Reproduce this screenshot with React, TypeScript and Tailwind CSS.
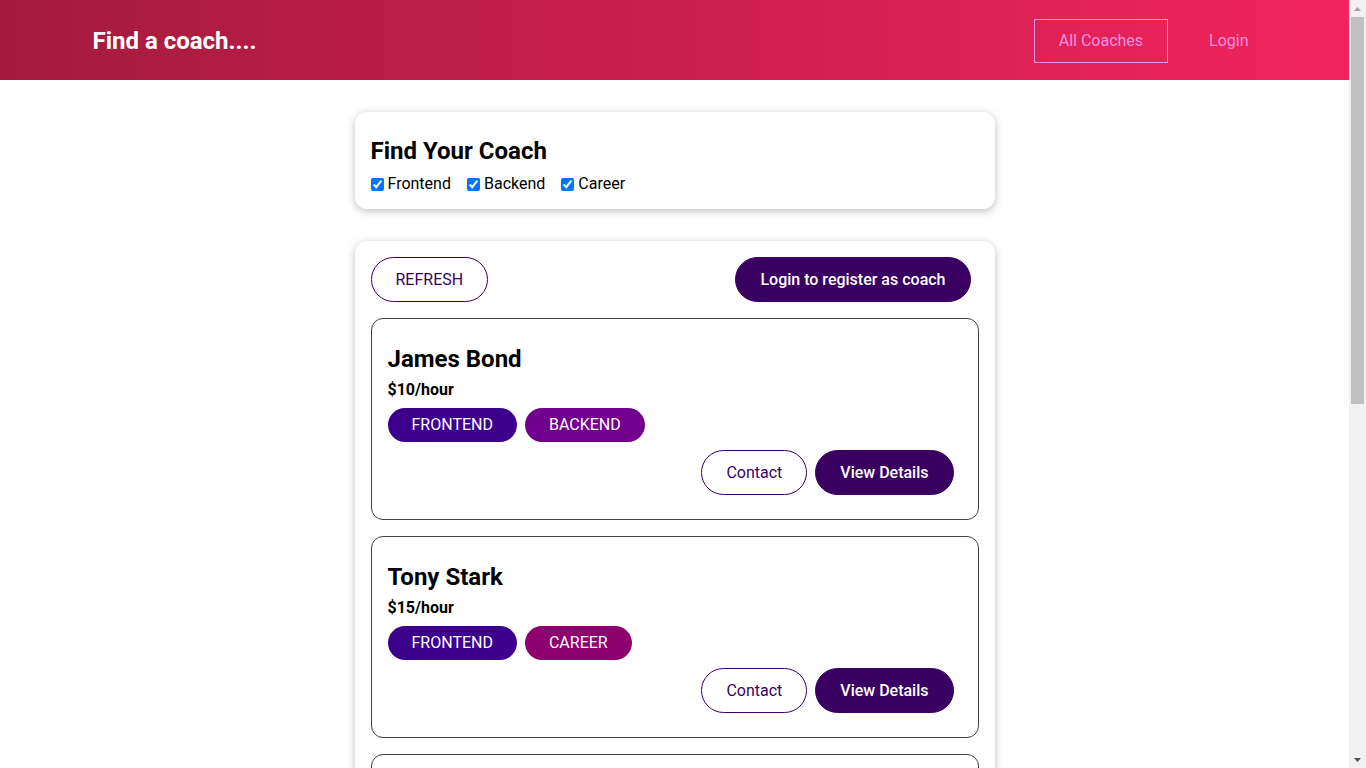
const areaStyles: Record<string, string> = {
  frontend: "bg-[#3d008d]",
  backend: "bg-[#71008f]",
  career: "bg-[#8d006e]",
};

const coaches = [
  { id: "c1", name: "James Bond", rate: 10, areas: ["frontend", "backend"] },
  { id: "c2", name: "Tony Stark", rate: 15, areas: ["frontend", "career"] },
  { id: "c3", name: "Bruce Wayne", rate: 30, areas: ["backend", "career"] },
  { id: "c4", name: "Peter Parker", rate: 20, areas: ["frontend"] },
  { id: "c5", name: "Diana Prince", rate: 25, areas: ["career"] },
];

const TheHeader = () => (
  <header className="w-full h-20 flex items-center pt-0.5 bg-gradient-to-r from-[#a41a3d] to-[#f2245e]">
    <nav className="w-[90%] mx-auto flex justify-between items-center">
      <h1 className="text-2xl font-bold text-white">
        <a href="#" className="pl-[25px] pr-6">Find a coach....</a>
      </h1>
      <ul className="flex items-center">
        <li className="mx-2">
          <a href="#" className="block px-6 py-[9px] leading-6 border border-[#f391e3] text-[#f391e3]">
            All Coaches
          </a>
        </li>
        <li className="mx-2">
          <a href="#" className="block px-6 py-[9px] leading-6 border border-transparent text-[#f391e3]">
            Login
          </a>
        </li>
      </ul>
    </nav>
  </header>
);

const CoachFilter = () => (
  <section className="bg-white rounded-xl shadow-[0_2px_8px_rgba(0,0,0,0.26)] px-4 pt-[21px] pb-[13px]">
    <h2 className="text-2xl font-bold leading-9 text-black">Find Your Coach</h2>
    <div className="flex items-center gap-4 mt-[3px]">
      {["Frontend", "Backend", "Career"].map((label) => (
        <span key={label} className="flex items-center gap-1">
          <input type="checkbox" defaultChecked className="w-[13px] h-[13px] accent-[#0075ff]" />
          <label className="text-base text-black">{label}</label>
        </span>
      ))}
    </div>
  </section>
);

const CoachItem = ({ coach }: { coach: (typeof coaches)[number] }) => (
  <li className="border border-[#424242] rounded-xl px-4 pt-[22px] pb-4">
    <h3 className="text-2xl font-bold leading-9 text-black">{coach.name}</h3>
    <h4 className="text-base font-bold leading-6 text-black mt-[1px]">${coach.rate}/hour</h4>
    <div className="flex gap-2 mt-[6px]">
      {coach.areas.map((area) => (
        <span
          key={area}
          className={"rounded-full px-6 py-[5px] leading-6 text-white uppercase " + areaStyles[area]}
        >
          {area}
        </span>
      ))}
    </div>
    <div className="flex justify-end gap-2 mt-[8px] mr-2 mb-2">
      <a href="#" className="h-[45px] flex items-center px-6 rounded-full border border-[#3a0061] text-[#3a0061]">
        Contact
      </a>
      <a href="#" className="h-[45px] flex items-center px-6 rounded-full border border-[#3a0061] bg-[#3a0061] text-white font-medium">
        View Details
      </a>
    </div>
  </li>
);

// classic window scrollbar, drawn as a rail beside the page
const ScrollRail = () => (
  <div className="w-[17px] shrink-0 h-full bg-[#f1f1f1] flex flex-col">
    <div className="h-[17px] flex items-center justify-center">
      <svg width="7" height="4" viewBox="0 0 7 4">
        <path d="M3.5 0L7 4H0z" fill="#a3a3a3" />
      </svg>
    </div>
    <div className="h-[387px] mx-[2px] bg-[#c1c1c1]" />
    <div className="flex-1" />
    <div className="h-[17px] flex items-center justify-center">
      <svg width="7" height="4" viewBox="0 0 7 4">
        <path d="M0 0H7L3.5 4z" fill="#505050" />
      </svg>
    </div>
  </div>
);

export default function App() {
  return (
    <div className="h-screen flex overflow-hidden bg-white font-['Roboto',sans-serif]">
      <div className="flex-1 min-w-0 overflow-hidden">
        <TheHeader />
        <main className="max-w-[40rem] mx-auto mt-8 mb-12 flex flex-col gap-8">
          <CoachFilter />
          <section className="bg-white rounded-xl shadow-[0_2px_8px_rgba(0,0,0,0.26)] p-4">
            <div className="flex justify-between items-center">
              <button className="h-[45px] px-6 rounded-full border border-[#3a0061] text-[#3a0061]">REFRESH</button>
              <a href="#" className="h-[45px] flex items-center px-6 mr-2 rounded-full border border-[#3a0061] bg-[#3a0061] text-white font-medium">
                Login to register as coach
              </a>
            </div>
            <ul className="flex flex-col gap-4 mt-4">
              {coaches.map((c) => (
                <CoachItem key={c.id} coach={c} />
              ))}
            </ul>
          </section>
        </main>
      </div>
      <ScrollRail />
    </div>
  );
}
